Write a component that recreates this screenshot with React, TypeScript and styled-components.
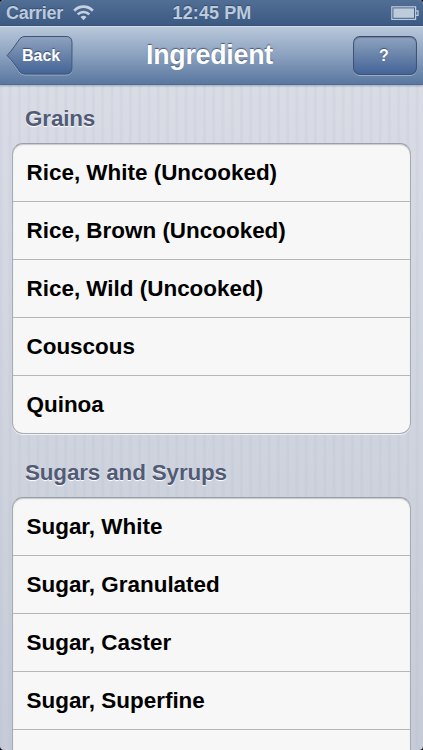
import React from 'react';
import styled, { createGlobalStyle } from 'styled-components';

const GlobalStyle = createGlobalStyle`
  * { box-sizing: border-box; }
  html, body { margin: 0; padding: 0; background: #000; }
  body { overflow: hidden; font-family: "Liberation Sans", Helvetica, Arial, sans-serif; font-weight: 700; }
`;

const Screen = styled.div`
  width: 423px;
  height: 750px;
  display: flex;
  flex-direction: column;
  overflow: hidden;
  border-radius: 4px;
  background:
    repeating-linear-gradient(90deg, rgba(165, 182, 204, 0.13) 0 2px, transparent 3px 8px, rgba(165, 182, 204, 0.13) 9.25px),
    linear-gradient(#d9dce5 84px, #d0d4de 420px, #c6cbd7);
`;

const StatusBar = styled.header`
  flex: none;
  height: 26px;
  display: grid;
  grid-template-columns: 1fr auto 1fr;
  align-items: center;
  padding: 0 4px 0 6px;
  color: #bdcadc;
  font-size: 18px;
  line-height: 26px;
  text-shadow: 0 -1px 1px rgba(35, 55, 88, 0.55);
  background: linear-gradient(#516f95, #3c5a82);
  border-bottom: 1px solid #38527a;
`;

const Carrier = styled.div`
  display: flex;
  align-items: center;
  gap: 10px;
  letter-spacing: -0.3px;
`;

const Clock = styled.span`
  position: relative;
  letter-spacing: 0.1px;
  margin-right: 1px;
`;

const Battery = styled.svg`
  justify-self: end;
`;

const NavBar = styled.nav`
  flex: none;
  height: 59px;
  display: grid;
  grid-template-columns: 1fr auto 1fr;
  align-items: start;
  padding: 9px 6px 0;
  background: linear-gradient(#b9c8da, #8ba1bf 50%, #59779f);
  border-top: 1px solid #d3deea;
  border-bottom: 1px solid #526b91;
  box-shadow: 0 1px 2px rgba(70, 85, 115, 0.4);
`;

const Title = styled.h1`
  margin: 0 4px 0 0;
  color: #fff;
  font-size: 26.8px;
  line-height: 38px;
  letter-spacing: -0.25px;
  text-shadow: 0 -1px 1px rgba(45, 62, 93, 0.75);
`;

const BackButton = styled.button`
  position: relative;
  width: 67px;
  height: 40px;
  padding: 0 0 1px 16px;
  border: 0;
  background: none;
  color: #fff;
  font: 700 16px/38px "Liberation Sans", Arial, sans-serif;
  text-align: left;
  text-shadow: 0 -1px 1px rgba(35, 52, 85, 0.7);
`;

const BackShape = styled.svg`
  position: absolute;
  inset: 0;
`;

const Label = styled.span`
  position: relative;
`;

const HelpButton = styled.button`
  justify-self: end;
  width: 64px;
  height: 39px;
  padding: 0 2px 0 0;
  border: 1px solid #405376;
  border-top-color: #394b6b;
  border-radius: 7px;
  color: #fff;
  font: 700 16px/36px "Liberation Sans", Arial, sans-serif;
  text-shadow: 0 -1px 1px rgba(35, 52, 85, 0.7);
  background: linear-gradient(#8fa3c0, #6a84aa 48%, #446498);
  box-shadow: inset 0 1px 1px rgba(48, 65, 96, 0.35), 0 1px 0 rgba(185, 202, 224, 0.6);
`;

const Content = styled.main`
  flex: 1;
  min-height: 0;
  overflow: hidden;
  padding: 0 12px;
`;

const SectionTitle = styled.h2<{ $first?: boolean }>`
  height: ${({ $first }) => ($first ? 58 : 63)}px;
  margin: 0;
  padding: ${({ $first }) => ($first ? 20 : 25)}px 13px 0;
  color: #515b75;
  font-size: 22.45px;
  line-height: 27px;
  letter-spacing: -0.15px;
  text-shadow: 0 1px 1px #fff;
`;

const Group = styled.ul`
  margin: 0;
  padding: 0;
  list-style: none;
  overflow: hidden;
  border: 1px solid #a7abb3;
  border-top-color: #999ea8;
  border-radius: 11px;
  background: #f7f7f7;
  box-shadow: inset 0 1px 1px rgba(110, 118, 132, 0.35), 0 1px 0 rgba(255, 255, 255, 0.75);
`;

const Row = styled.li`
  height: 58px;
  padding: 0 13.5px;
  border-bottom: 1px solid #b5b6b8;
  color: #000;
  font-size: 22.45px;
  line-height: 57px;
  white-space: nowrap;
  &:last-child { height: 57px; border-bottom: 0; }
`;

const sections = [
  {
    title: 'Grains',
    items: ['Rice, White (Uncooked)', 'Rice, Brown (Uncooked)', 'Rice, Wild (Uncooked)', 'Couscous', 'Quinoa'],
  },
  {
    title: 'Sugars and Syrups',
    items: ['Sugar, White', 'Sugar, Granulated', 'Sugar, Caster', 'Sugar, Superfine', ''],
  },
];

function WifiIcon() {
  return (
    <svg width="21" height="16" viewBox="0 0 21 16" fill="none" stroke="#c5d1e1" strokeWidth="2.7">
      <path d="M1.2 5.7C6.4.3 14.6.3 19.8 5.7" />
      <path d="M4.7 9.4C8 6.2 13 6.2 16.3 9.4" />
      <path d="M7.5 12.1Q10.5 9.5 13.5 12.1L10.5 15.2Z" fill="#c5d1e1" stroke="none" />
    </svg>
  );
}

export default function App() {
  return (
    <>
      <GlobalStyle />
      <Screen>
        <StatusBar>
          <Carrier>Carrier <WifiIcon /></Carrier>
          <Clock>12:45 PM</Clock>
          <Battery width="28" height="15" viewBox="0 0 28 15">
            <rect x=".8" y=".8" width="23.8" height="12.6" fill="none" stroke="#bdcadd" strokeWidth="1.2" />
            <rect x="2.4" y="2.4" width="20.6" height="9.4" fill="#becbda" />
            <path d="M25 4.8h2v4.6h-2" fill="none" stroke="#bdcadd" strokeWidth="1.3" />
          </Battery>
        </StatusBar>
        <NavBar>
          <BackButton>
            <BackShape width="67" height="40" viewBox="0 0 67 40">
              <defs>
                <linearGradient id="backFill" x1="0" y1="0" x2="0" y2="1">
                  <stop stopColor="#8fa3c0" />
                  <stop offset=".48" stopColor="#6a84aa" />
                  <stop offset="1" stopColor="#446498" />
                </linearGradient>
              </defs>
              <path d="M1 20C6 15 11 7 14 3Q16 1 19 1H60Q66 1 66 7V33Q66 39 60 39H19Q16 39 14 37C11 33 6 25 1 20Z" fill="none" stroke="#b1c1d8" strokeOpacity=".7" />
              <path d="M1 19.5C6 14.5 11 6.5 14 2.5Q16 .5 19 .5H60Q66 .5 66 6.5V32Q66 38 60 38H19Q16 38 14 36C11 32 6 24 1 19.5Z" fill="url(#backFill)" stroke="#405376" />
            </BackShape>
            <Label>Back</Label>
          </BackButton>
          <Title>Ingredient</Title>
          <HelpButton>?</HelpButton>
        </NavBar>
        <Content>
          {sections.map((section, index) => (
            <section key={section.title}>
              <SectionTitle $first={index === 0}>{section.title}</SectionTitle>
              <Group>
                {section.items.map((item) => <Row key={item}>{item}</Row>)}
              </Group>
            </section>
          ))}
        </Content>
      </Screen>
    </>
  );
}
